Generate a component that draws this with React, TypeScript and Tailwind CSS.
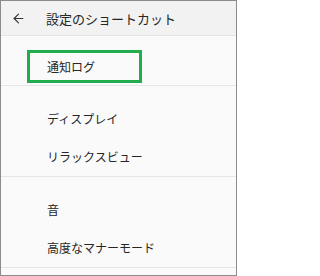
import { ArrowLeft } from 'lucide-react';

const font = { fontFamily: '"Noto Sans CJK JP", "Noto Sans", sans-serif' };

const rowCls = 'h-[38px] flex items-center pl-[46px] text-[12px] text-[#262626]';

export default function App() {
    return (
        <div
            className="w-[237px] h-[276px] border border-[#8c8c8c] bg-[#fafafa] flex flex-col overflow-hidden"
            style={font}
        >
            <header className="h-[35px] shrink-0 flex items-center bg-[#f2f2f2] border-b border-[#e4e4e4]">
                <ArrowLeft size={15} strokeWidth={1.8} className="ml-[10px] text-[#333]" />
                <span className="ml-[20px] text-[13px] text-[#262626] leading-none">設定のショートカット</span>
            </header>

            <section className="pt-[14px] pb-[2px] pl-[26px] border-b border-[#e6e6e6]">
                <div className="w-[115px] h-[33px] border-[3px] border-[#22ad4c] flex items-center pl-[17px] text-[12px] text-[#262626]">
                    通知ログ
                </div>
            </section>

            <section className="pt-[14px] border-b border-[#e6e6e6]">
                <div className={rowCls}>ディスプレイ</div>
                <div className={rowCls}>リラックスビュー</div>
            </section>

            <section className="pt-[14px] border-b border-[#e6e6e6]">
                <div className={rowCls}>音</div>
                <div className={rowCls}>高度なマナーモード</div>
            </section>
        </div>
    );
}
